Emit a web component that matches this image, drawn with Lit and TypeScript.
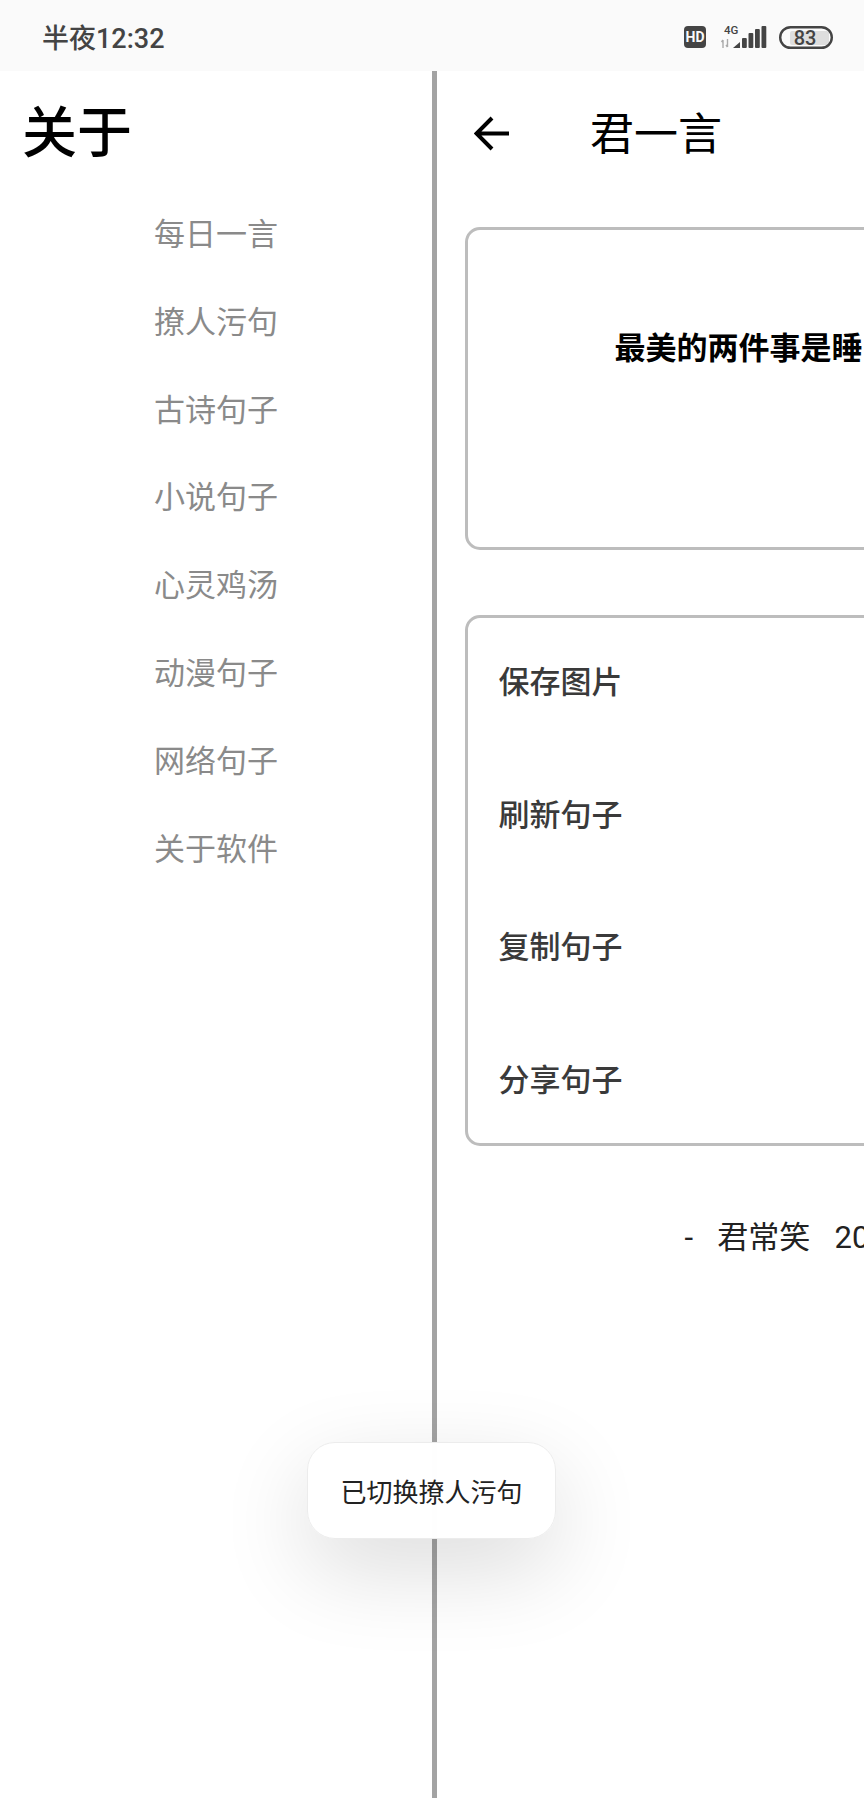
import { LitElement, html, css } from "lit";
import { customElement } from "lit/decorators.js";

const MENU = ["每日一言", "撩人污句", "古诗句子", "小说句子", "心灵鸡汤", "动漫句子", "网络句子", "关于软件"];
const ACTIONS = ["保存图片", "刷新句子", "复制句子", "分享句子"];

@customElement("app-root")
export class AppRoot extends LitElement {
  static styles = css`
    :host {
      display: block;
      position: relative;
      width: 864px;
      height: 1798px;
      overflow: hidden;
      background: #fff;
      font-family: Roboto, "Noto Sans CJK SC", sans-serif;
    }
    .status {
      height: 71px;
      background: #fafafa;
      display: flex;
      align-items: flex-start;
      justify-content: space-between;
      padding: 0 31px 0 42px;
      box-sizing: border-box;
    }
    .time { font-size: 27px; font-weight: 500; color: #444; line-height: 30px; margin-top: 24px; }
    .status-icons { display: flex; margin-top: 21px; }
    .status-icons svg { display: block; }
    .body { display: flex; height: 1727px; }
    .drawer {
      width: 437px;
      flex: none;
      box-sizing: border-box;
      border-right: 5px solid #a3a3a3;
    }
    .drawer h1 {
      margin: 0;
      height: 114px;
      padding-left: 22px;
      display: flex;
      align-items: center;
      font-size: 55px;
      font-weight: 500;
      color: #000;
    }
    .menu { display: flex; flex-direction: column; padding-top: 2.7px; }
    .menu div {
      height: 87.8px;
      display: flex;
      align-items: center;
      padding-left: 154px;
      font-size: 31px;
      color: #8a8a8a;
    }
    .main { flex: 1; min-width: 0; overflow: hidden; padding: 23px 0 0 28px; }
    .header { display: flex; align-items: center; height: 80px; padding-left: 9px; margin-bottom: 53px; }
    .header svg { flex: none; display: block; margin-right: 80px; }
    .header span { font-size: 44px; color: #000; white-space: nowrap; padding-bottom: 6px; }
    .card {
      width: 460px;
      box-sizing: border-box;
      border: 3px solid #bdbdbd;
      border-radius: 15px;
    }
    .quote-card {
      height: 323px;
      padding: 97px 0 0 146.5px;
      font-size: 31px;
      font-weight: 700;
      line-height: 44px;
      color: #000;
      white-space: nowrap;
      margin-bottom: 65px;
    }
    .actions {
      height: 531px;
      padding: 43px 0 0 30.5px;
      display: flex;
      flex-direction: column;
      gap: 88.7px;
    }
    .actions div { font-size: 31px; font-weight: 500; line-height: 44px; color: #3a3a3a; white-space: nowrap; }
    .footer {
      margin-top: 70px;
      padding-left: 219.5px;
      font-size: 31px;
      line-height: 44px;
      color: #222;
      white-space: pre;
      word-spacing: 0.4px;
    }
    .toast {
      position: absolute;
      left: 307px;
      top: 1442px;
      width: 249px;
      height: 97px;
      box-sizing: border-box;
      display: flex;
      align-items: center;
      justify-content: center;
      background: rgba(255, 255, 255, 0.985);
      border: 1px solid #ececec;
      border-radius: 28px;
      box-shadow: 0 30px 90px rgba(0, 0, 0, 0.14);
      font-size: 26px;
      color: #222;
      white-space: nowrap;
    }
  `;

  private statusIcons() {
    return html`<svg width="150" height="32" viewBox="0 -4 150 32">
      <rect x="1" y="1" width="22" height="22" rx="4" fill="#444" />
      <text x="12" y="17" text-anchor="middle" font-size="14" font-weight="700" fill="#fafafa" font-family="Roboto">HD</text>
      <text x="41" y="8.500" font-size="11.500" font-weight="500" fill="#444" font-family="Roboto">4G</text>
      <path d="M40 15v8M38.500 17l1.500-2M44.500 14v8M43 20l1.500 2" stroke="#aaa" stroke-width="1.400" fill="none" />
      <path d="M50 23l7-6v6z" fill="#444" />
      <rect x="59" y="13" width="4.800" height="10" rx="1" fill="#444" />
      <rect x="65.500" y="8" width="4.800" height="15" rx="1" fill="#444" />
      <rect x="72" y="4" width="4.800" height="19" rx="1" fill="#444" />
      <rect x="78.500" y="1" width="4.800" height="22" rx="1" fill="#444" />
      <rect x="107" y="6" width="39" height="14" rx="2" fill="#dedede" />
      <rect x="97.200" y="2.200" width="51.600" height="20.600" rx="10.300" fill="none" stroke="#444" stroke-width="2.400" />
      <text x="122" y="19.500" text-anchor="middle" font-size="20" font-weight="500" fill="#444" font-family="Roboto">83</text>
    </svg>`;
  }

  render() {
    return html`
      <div class="status">
        <span class="time">半夜12:32</span>
        <div class="status-icons">${this.statusIcons()}</div>
      </div>
      <div class="body">
        <aside class="drawer">
          <h1>关于</h1>
          <nav class="menu">${MENU.map((m) => html`<div>${m}</div>`)}</nav>
        </aside>
        <section class="main">
          <div class="header">
            <svg width="36" height="36" viewBox="0 0 36 36">
              <path d="M35 17.500H3M18 2L2.500 17.500 18 33" fill="none" stroke="#000" stroke-width="4" />
            </svg>
            <span>君一言</span>
          </div>
          <div class="card quote-card">最美的两件事是睡</div>
          <div class="card actions">${ACTIONS.map((a) => html`<div>${a}</div>`)}</div>
          <div class="footer">-   君常笑   20</div>
        </section>
      </div>
      <div class="toast">已切换撩人污句</div>
    `;
  }
}
